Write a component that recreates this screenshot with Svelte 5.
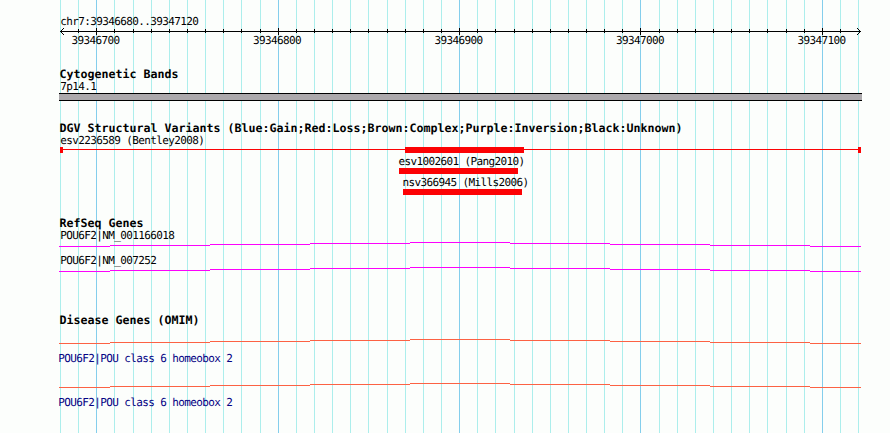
<script>
  const WIDTH = 803;
  const LEFT = 59;
  // pixel columns of the 10 bp grid; every tenth one marks 100 bp
  const columns = [
    60, 78, 96, 114, 133, 151, 169, 187, 205, 223, 241, 260, 278, 296, 314,
    332, 350, 368, 387, 405, 423, 441, 459, 477, 495, 514, 532, 550, 568, 586,
    604, 622, 640, 659, 677, 695, 713, 731, 749, 767, 786, 804, 822, 840, 858
  ];
  const grid = columns.map((x, i) => ({ x: x - LEFT, major: i % 10 === 2 }));
  const positions = ['39346700', '39346800', '39346900', '39347000', '39347100'];

  const intron = [4, 3, 2, 1, 0, 1, 2, 3, 4].map((y, i) => {
    const start = i === 0 ? 0 : i * 100 - 49;
    const end = i === 8 ? 802 : i * 100 + 51;
    return { x: start, y, w: end - start };
  });

  const refseq = ['POU6F2|NM_001166018', 'POU6F2|NM_007252'];
  const omim = ['POU6F2|POU class 6 homeobox 2', 'POU6F2|POU class 6 homeobox 2'];
  const calls = [
    { name: 'esv1002601 (Pang2010)', label: 339.4, bar: 340 },
    { name: 'nsv366945 (Mills2006)', label: 343.4, bar: 344 }
  ];
</script>

{#snippet hatline(color)}
  <svg class="glyph" width={WIDTH} height="5" shape-rendering="crispEdges">
    {#each intron as s}
      <rect x={s.x} y={s.y} width={s.w} height="1" fill={color} />
    {/each}
  </svg>
{/snippet}

<main class="browser">
  <svg class="grid" width={WIDTH} height="433" shape-rendering="crispEdges" aria-hidden="true">
    {#each grid as g}
      <rect x={g.x} y="0" width="1" height="433" fill={g.major ? '#84ceec' : '#aceeec'} />
    {/each}
  </svg>

  <section class="ruler">
    <div class="label">chr7:39346680..39347120</div>
    <svg class="glyph" width={WIDTH} height="7" shape-rendering="crispEdges">
      <rect x="1" y="3" width="801" height="1" />
      {#each grid.slice(1, -1) as g}
        <rect x={g.x} y={g.major ? 0 : 1} width="1" height={g.major ? 7 : 4} />
      {/each}
      {#each [1, 2, 3] as d}
        <rect x={1 + d} y={3 - d} width="1" height="1" />
        <rect x={1 + d} y={3 + d} width="1" height="1" />
        <rect x={801 - d} y={3 - d} width="1" height="1" />
        <rect x={801 - d} y={3 + d} width="1" height="1" />
      {/each}
    </svg>
    <div class="positions">
      {#each positions as p}<span>{p}</span>{/each}
    </div>
  </section>

  <section class="bands">
    <h2>Cytogenetic Bands</h2>
    <div class="label">7p14.1</div>
    <div class="band"></div>
  </section>

  <section class="variants">
    <h2>DGV Structural Variants (Blue:Gain;Red:Loss;Brown:Complex;Purple:Inversion;Black:Unknown)</h2>
    <div class="label">esv2236589 (Bentley2008)</div>
    <svg class="glyph red" width={WIDTH} height="6" shape-rendering="crispEdges">
      <rect x="1" y="2" width="801" height="1" />
      <rect x="1" y="0" width="3" height="6" />
      <rect x="346" y="0" width="119" height="6" />
      <rect x="799" y="0" width="3" height="6" />
    </svg>
    {#each calls as c}
      <div class="call">
        <div class="label" style="padding-left: {c.label}px">{c.name}</div>
        <div class="bar" style="margin-left: {c.bar}px"></div>
      </div>
    {/each}
  </section>

  <section class="refseq">
    <h2>RefSeq Genes</h2>
    {#each refseq as name}
      <div class="gene">
        <div class="label">{name}</div>
        {@render hatline('#fc02fc')}
      </div>
    {/each}
  </section>

  <section class="omim">
    <h2>Disease Genes (OMIM)</h2>
    {#each omim as name}
      <div class="disease">
        {@render hatline('#fc6244')}
        <div class="label">{name}</div>
      </div>
    {/each}
  </section>
</main>

<style>
  :global(body) {
    background: #fcfefc;
  }
  .browser {
    position: relative;
    isolation: isolate;
    box-sizing: border-box;
    width: 890px;
    height: 433px;
    padding: 15px 28px 0 59px;
    overflow: hidden;
    color: #000;
    font-family: 'DejaVu Sans Mono', 'Liberation Mono', monospace;
    text-rendering: geometricPrecision;
  }
  .grid {
    position: absolute;
    top: 0;
    left: 59px;
    z-index: -1;
  }
  section {
    display: flex;
    flex-direction: column;
    align-items: flex-start;
  }
  h2 {
    margin: 0;
    padding-left: 0.5px;
    font-size: 11.63px;
    line-height: 14px;
    height: 14px;
    font-weight: bold;
    white-space: pre;
  }
  .label,
  .positions {
    font-size: 11px;
    letter-spacing: -0.622px;
    line-height: 13px;
    height: 13px;
    white-space: pre;
  }
  .label {
    padding-left: 1.3px;
  }
  .glyph {
    display: block;
  }
  .red {
    fill: #fc0204;
  }
  .ruler {
    height: 52px;
  }
  .positions {
    display: flex;
    gap: 133.5px;
    padding-left: 12.5px;
    margin-top: -1px;
  }
  .positions span {
    width: 48px;
  }
  .bands {
    height: 54px;
  }
  .bands .label {
    margin-top: -1px;
  }
  .band {
    box-sizing: border-box;
    width: 803px;
    height: 8px;
    border: solid #000;
    border-width: 1px 0;
    background: #aca9ac;
  }
  .variants {
    height: 95px;
  }
  .variants h2 + .label {
    margin-top: -1px;
  }
  .call {
    display: flex;
    flex-direction: column;
    margin-top: 2px;
  }
  .call .bar {
    width: 119px;
    height: 6px;
    background: #fc0204;
  }
  .refseq {
    height: 97px;
  }
  .refseq h2 {
    margin-bottom: -1px;
  }
  .gene {
    height: 25px;
  }
  .disease {
    height: 44px;
  }
  .omim h2 {
    margin-bottom: 12px;
  }
  .disease .label {
    margin: 8px 0 0 -1px;
    padding-left: 0.3px;
    color: #040284;
  }
</style>
